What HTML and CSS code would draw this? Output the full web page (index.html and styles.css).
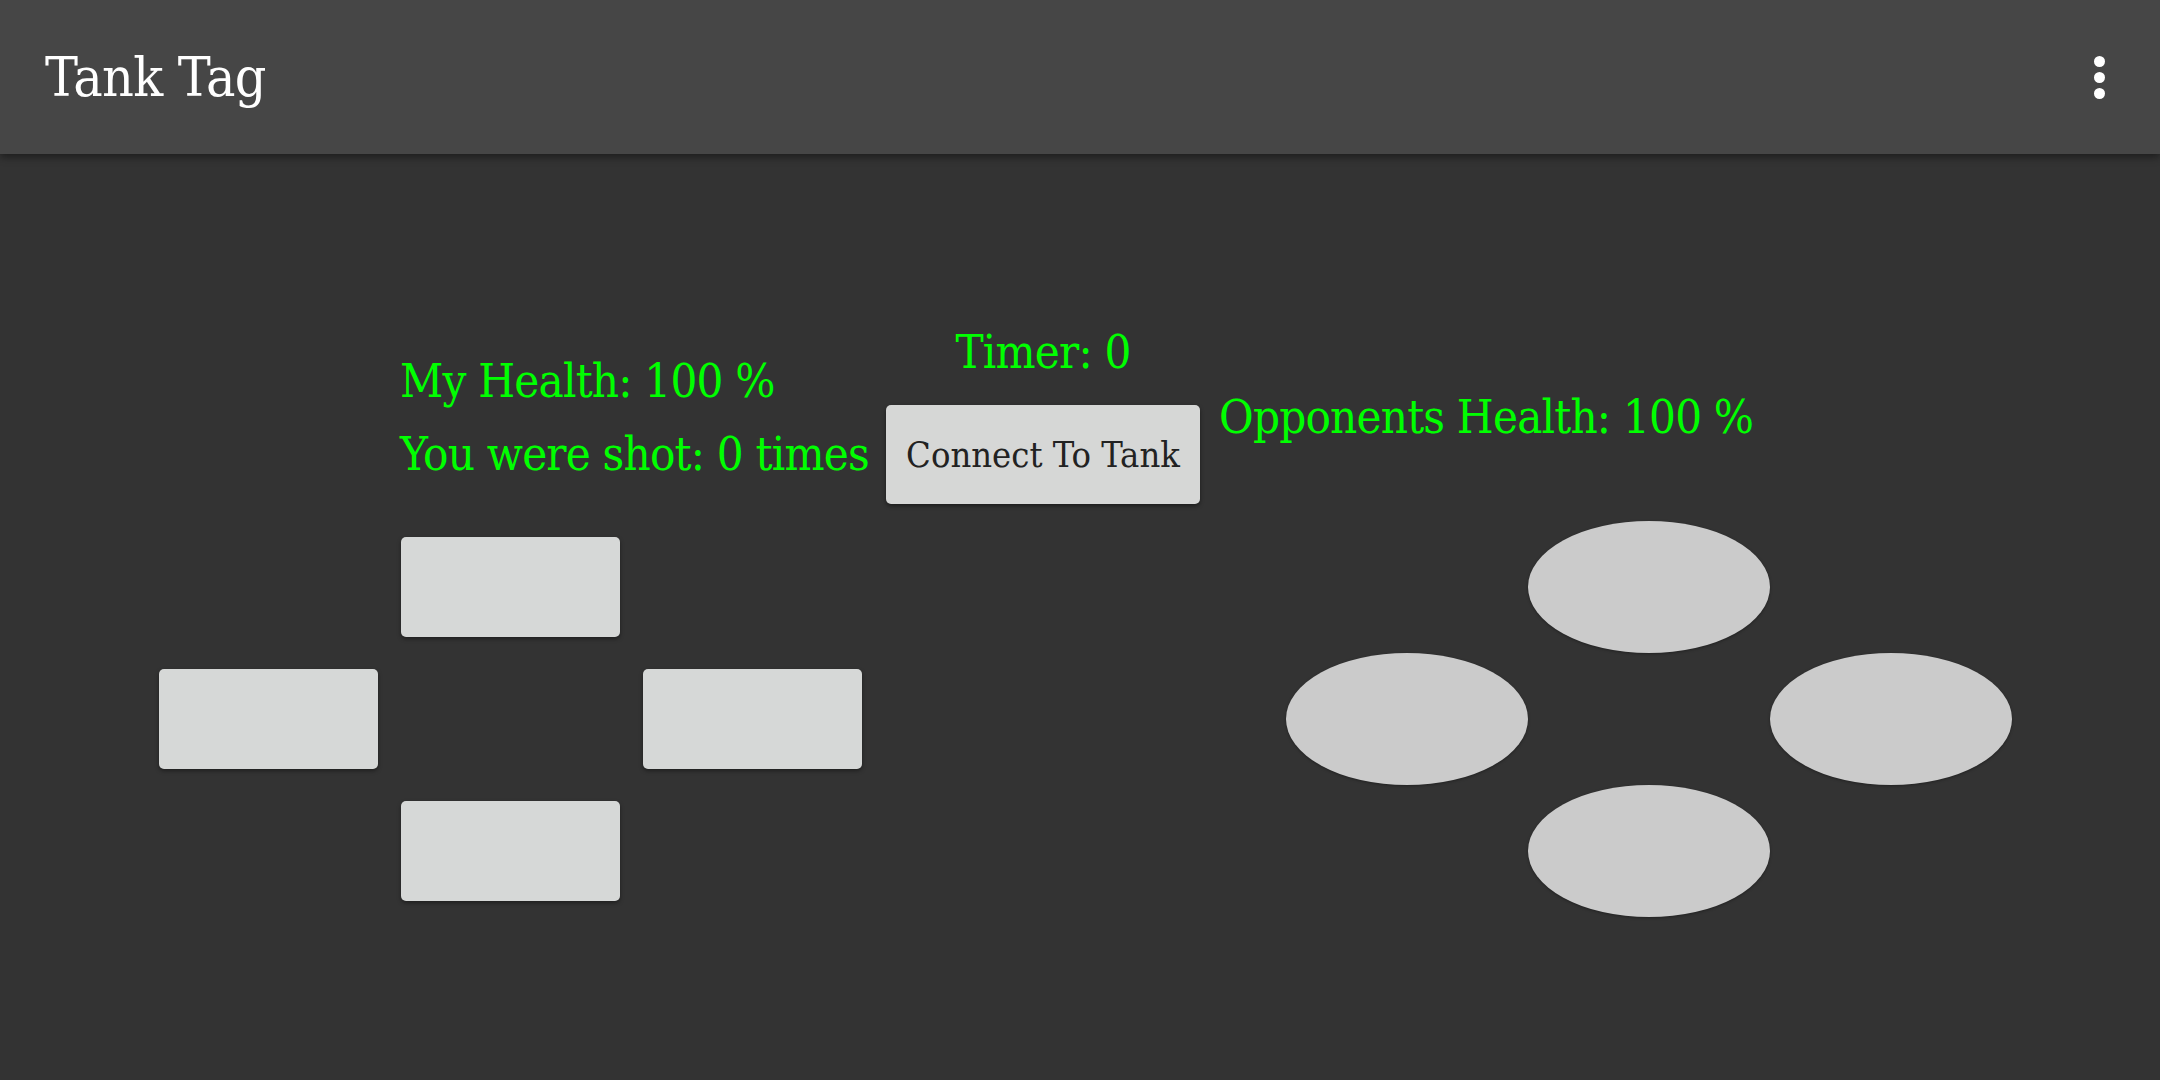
FILE: index.html
```html
<!DOCTYPE html>
<html>
<head>
<meta charset="utf-8">
<title>Tank Tag</title>
<link rel="stylesheet" href="styles.css">
</head>
<body>
<header class="appbar">
  <div class="title">Tank Tag</div>
  <div class="menu" aria-label="More options">
    <span class="dot"></span><span class="dot"></span><span class="dot"></span>
  </div>
</header>
<main class="main">
  <section class="status">
    <div class="stats">
      <div class="line">My Health: 100 %</div>
      <div class="line second">You were shot: 0 times</div>
    </div>
    <div class="center">
      <div class="line timer">Timer: 0</div>
      <button class="connect">Connect To Tank</button>
    </div>
    <div class="line opponent">Opponents Health: 100 %</div>
  </section>
  <section class="controls">
    <div class="dpad">
      <button class="pad up"></button>
      <button class="pad left"></button>
      <button class="pad right"></button>
      <button class="pad down"></button>
    </div>
    <div class="fire">
      <button class="oval top"></button>
      <button class="oval left"></button>
      <button class="oval right"></button>
      <button class="oval bottom"></button>
    </div>
  </section>
</main>
</body>
</html>
```

FILE: styles.css
```css
html, body {
  margin: 0;
  padding: 0;
}
body {
  width: 2160px;
  height: 1080px;
  overflow: hidden;
  background: #333333;
  font-family: "DejaVu Serif Condensed", "DejaVu Serif", serif;
  font-stretch: condensed;
}
.appbar {
  height: 154px;
  background: #464646;
  box-shadow: 0 3px 8px rgba(0, 0, 0, 0.45);
  display: flex;
  align-items: center;
  justify-content: space-between;
  padding: 0 55px 0 45px;
  position: relative;
  z-index: 1;
}
.title {
  color: #ffffff;
  font-size: 55px;
  letter-spacing: -0.6px;
}
.menu {
  display: flex;
  flex-direction: column;
  gap: 5px;
}
.dot {
  width: 11px;
  height: 11px;
  border-radius: 50%;
  background: #ffffff;
}
.main {
  padding-top: 169px;
}
.status {
  display: grid;
  grid-template-columns: 486px 314px auto;
  padding-left: 400px;
  align-items: start;
}
.line {
  color: #00ff00;
  font-size: 47px;
  line-height: 58px;
  letter-spacing: -0.8px;
  white-space: nowrap;
}
.stats {
  padding-top: 29px;
}
.second {
  margin-top: 15px;
}
.center {
  display: flex;
  flex-direction: column;
  align-items: center;
}
.timer {
  text-align: center;
}
.connect {
  margin-top: 24px;
  width: 314px;
  height: 99px;
  border: none;
  border-radius: 5px;
  background: #d6d7d6;
  box-shadow: 0 2px 4px rgba(0, 0, 0, 0.45);
  color: #222222;
  font-family: inherit;
  font-stretch: condensed;
  font-size: 36px;
  padding: 0;
}
.opponent {
  margin-top: 65px;
  margin-left: 19px;
}
.controls {
  display: flex;
  align-items: flex-start;
  margin-top: 17px;
  padding-left: 159px;
}
.dpad {
  margin-top: 16px;
  display: grid;
  grid-template-columns: repeat(3, 219px);
  grid-template-rows: repeat(3, 100px);
  column-gap: 23px;
  row-gap: 32px;
}
.pad {
  border: none;
  padding: 0;
  border-radius: 5px;
  background: #d6d8d7;
  box-shadow: 0 2px 4px rgba(0, 0, 0, 0.4);
}
.pad.up { grid-column: 2; grid-row: 1; }
.pad.left { grid-column: 1; grid-row: 2; }
.pad.right { grid-column: 3; grid-row: 2; }
.pad.down { grid-column: 2; grid-row: 3; }
.fire {
  margin-left: 424px;
  display: grid;
  grid-template-columns: repeat(3, 242px);
  grid-template-rows: repeat(3, 132px);
}
.oval {
  border: none;
  padding: 0;
  border-radius: 50%;
  background: #cbcbcb;
  box-shadow: 0 1px 3px rgba(0, 0, 0, 0.35);
}
.oval.top { grid-column: 2; grid-row: 1; }
.oval.left { grid-column: 1; grid-row: 2; }
.oval.right { grid-column: 3; grid-row: 2; }
.oval.bottom { grid-column: 2; grid-row: 3; }
```
